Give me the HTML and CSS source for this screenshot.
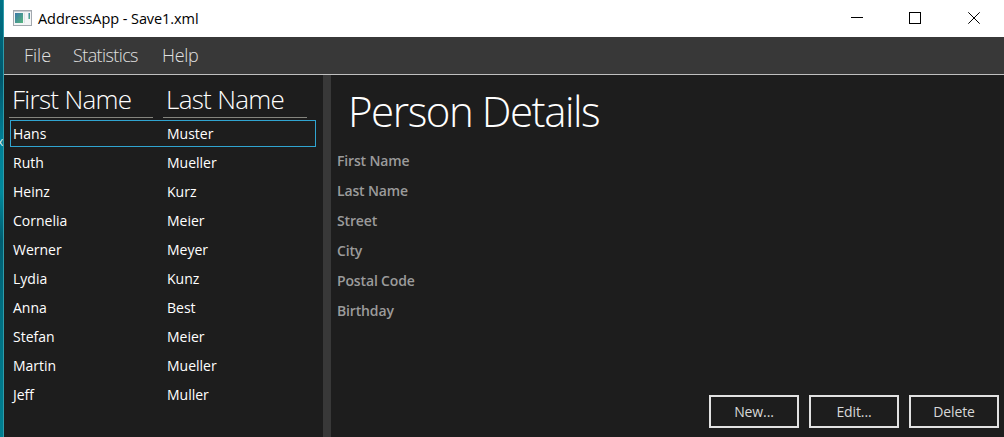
FILE: index.html
```
<!DOCTYPE html>
<html lang="en">
<head>
<meta charset="utf-8">
<title>AddressApp - Save1.xml</title>
<link rel="stylesheet" href="styles.css">
</head>
<body>
<div class="desktop"><span class="desktop-label">x</span></div>
<div class="window">
  <header class="titlebar">
    <svg class="app-icon" width="19" height="16" viewBox="0 0 19 16">
      <defs><linearGradient id="g" x1="0" y1="0" x2="1" y2="1"><stop offset="0" stop-color="#3a78a8"/><stop offset="1" stop-color="#55b67c"/></linearGradient></defs>
      <rect x=".5" y=".5" width="18" height="15" fill="#f3f5f6" stroke="#a2a8ae"/>
      <path d="M1 1.500h17" stroke="#c9ced3"/>
      <rect x="2" y="3" width="8" height="10" fill="url(#g)"/>
      <path d="M11.500 3v10" stroke="#dde2e4"/>
      <rect x="15.500" y="3" width="1.500" height="6" fill="url(#g)"/>
    </svg>
    <span class="title">AddressApp - Save1.xml</span>
    <svg class="controls" width="130" height="12" viewBox="0 0 130 12" fill="none" stroke="#000">
      <path d="M0 5.500h12"/><rect x="58.500" y=".5" width="11" height="11"/><path d="M117.300 .3l11.400 11.400M128.700 .3l-11.400 11.400"/>
    </svg>
  </header>
  <nav class="menubar"><span class="m-file">File</span><span class="m-stats">Statistics</span><span class="m-help">Help</span></nav>
  <main class="content">
    <section class="people">
      <div class="head"><span class="h-first">First Name</span><span class="h-last">Last Name</span></div>
      <div class="row selected"><span>Hans</span><span>Muster</span></div>
      <div class="row"><span>Ruth</span><span>Mueller</span></div>
      <div class="row"><span>Heinz</span><span>Kurz</span></div>
      <div class="row"><span>Cornelia</span><span>Meier</span></div>
      <div class="row"><span>Werner</span><span>Meyer</span></div>
      <div class="row"><span>Lydia</span><span>Kunz</span></div>
      <div class="row"><span>Anna</span><span>Best</span></div>
      <div class="row"><span>Stefan</span><span>Meier</span></div>
      <div class="row"><span>Martin</span><span>Mueller</span></div>
      <div class="row"><span>Jeff</span><span>Muller</span></div>
    </section>
    <div class="divider"></div>
    <section class="details">
      <h1>Person Details</h1>
      <div class="fields"><span>First Name</span><span>Last Name</span><span>Street</span><span>City</span><span>Postal Code</span><span>Birthday</span></div>
      <div class="buttons"><button>New...</button><button>Edit...</button><button>Delete</button></div>
    </section>
  </main>
</div>
</body>
</html>
```
FILE: styles.css
```
* { box-sizing: border-box; }
body {
  margin: 0; width: 1004px; height: 437px; display: flex; overflow: hidden;
  font-family: "Open Sans", "Noto Sans", sans-serif; font-size: 14px; white-space: nowrap;
  background: #1d1d1d;
}
.desktop {
  width: 4px; flex: none; overflow: hidden; border-right: 1px solid #2d9caa;
  background: linear-gradient(#007286, #00566c 18%, #007f96 32%, #00889b 44%, #005c70 55%, #006d80 70%, #007f91);
}
.desktop-label { display: block; margin: 133px 0 0 -3px; font-size: 12px; line-height: 18px; color: #dceef2; }
.window { flex: 1; display: flex; flex-direction: column; }
.titlebar { height: 37px; flex: none; background: #fff; display: flex; align-items: center; padding: 0 23px 0 9px; }
.app-icon { margin-top: -2px; }
.title { margin-left: 6px; color: #000; font-size: 14.500px; letter-spacing: -.07px; }
.controls { margin-left: auto; margin-top: -1px; }
.menubar {
  height: 38px; flex: none; background: #383838; border-bottom: 1px solid #c0c0c0;
  color: #e0e0e0; font-size: 18px; font-weight: 300; line-height: 37px; display: flex; padding-left: 20px;
}
.m-file { width: 49px; }
.m-stats { width: 89px; letter-spacing: -.6px; }
.m-help { letter-spacing: -.3px; }
.content { flex: 1; display: flex; }
.people { width: 319px; flex: none; padding: 6px 7px 0 5px; color: #fff; }
.head { display: flex; gap: 10px; margin-bottom: 2px; }
.head span {
  width: 144px; height: 37px; border-bottom: 1px solid #85857e; padding-left: 3px;
  font-size: 26px; line-height: 36px; font-weight: 300; letter-spacing: -.7px;
}
.row { display: flex; height: 27px; margin: 0 0 2px 1px; padding-left: 3px; width: 306px; line-height: 27px; letter-spacing: 0; }
.row span { width: 154px; flex: none; }
.row span + span { width: 149px; }
.selected { outline: 1px solid #30a4d0; outline-offset: -1px; }
.divider { width: 8px; flex: none; background: #383838; }
.details { flex: 1; display: flex; flex-direction: column; padding: 0 5px 9px 6px; }
h1 { margin: 5px 0 0 11px; height: 66px; line-height: 62px; font-size: 42px; font-weight: 300; letter-spacing: -1.450px; color: #fff; }
.fields { display: flex; flex-direction: column; color: #9b9b9b; font-weight: 600; letter-spacing: -.15px; }
.fields span { height: 30px; line-height: 30px; }
.buttons { display: flex; gap: 10px; justify-content: flex-end; margin-top: auto; }
button {
  width: 90px; height: 33px; padding: 0; border: 2px solid #e2e2e2; background: #1d1d1d;
  color: #d8d8d8; font: 14px "Open Sans", "Noto Sans", sans-serif; letter-spacing: -.1px;
}
```
